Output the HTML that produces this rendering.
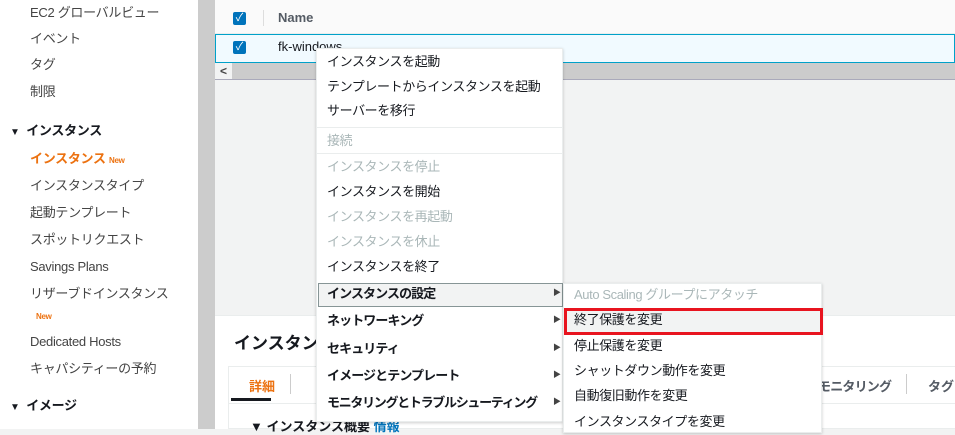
<!DOCTYPE html><html><head><meta charset="utf-8"><style>
*{margin:0;padding:0;box-sizing:border-box}
body{width:955px;height:429px;overflow:hidden;position:relative;background:#f2f3f3;font-family:"Liberation Sans","Noto Sans CJK JP",sans-serif;font-size:13px;color:#16191f}
.a{position:absolute;white-space:nowrap}
.sb{left:0;top:0;width:198px;height:429px;background:#fff}
.sb div{position:absolute;left:30px;line-height:18px;color:#444;letter-spacing:-0.3px}
.g{left:198px;top:0;width:17px;height:429px;background:#ccc}
.cb{width:13px;height:13px;background:#0073bb;border-radius:2px;color:#fff;font-size:11px;line-height:13px;text-align:center}
.m div.i{position:absolute;left:10px;line-height:18px;letter-spacing:-0.4px}
.m div.b{font-weight:bold;letter-spacing:-0.9px}
.dis{color:#aab7b8}
.arr{position:absolute;left:236px;font-size:8px;color:#444}
.sep{position:absolute;left:0;width:246px;height:1px;background:#eaeded}
.s div{position:absolute;left:10px;line-height:18px;letter-spacing:-0.4px}
</style></head><body>
<div class="a sb">
<div style="top:4px">EC2 グローバルビュー</div>
<div style="top:30px">イベント</div>
<div style="top:56px">タグ</div>
<div style="top:83px">制限</div>
<div style="top:122px;left:10px;font-weight:bold;color:#16191f"><span style="font-size:10px">▼</span>&nbsp; インスタンス</div>
<div style="top:150px;color:#ec7211;font-weight:bold">インスタンス <span style="font-size:8px">New</span></div>
<div style="top:177px">インスタンスタイプ</div>
<div style="top:204px">起動テンプレート</div>
<div style="top:231px">スポットリクエスト</div>
<div style="top:258px">Savings Plans</div>
<div style="top:285px">リザーブドインスタンス</div>
<div style="top:308px;left:36px;color:#ec7211;font-weight:bold;font-size:8px">New</div>
<div style="top:333px">Dedicated Hosts</div>
<div style="top:360px">キャパシティーの予約</div>
<div style="top:397px;left:10px;font-weight:bold;color:#16191f"><span style="font-size:10px">▼</span>&nbsp; イメージ</div>
</div>
<div class="a g"></div>
<div class="a" style="left:215px;top:0;width:740px;height:34px;background:#fafafa;border-bottom:1px solid #eaeded"></div>
<div class="a" style="left:263px;top:10px;width:1px;height:16px;background:#ddd"></div>
<div class="a cb" style="left:233px;top:12px">✓</div>
<div class="a" style="left:278px;top:10px;font-weight:bold;color:#545b64">Name</div>
<div class="a" style="left:215px;top:34px;width:740px;height:29px;background:#f1faff;border:1px solid #00a1c9"></div>
<div class="a cb" style="left:233px;top:41px">✓</div>
<div class="a" style="left:278px;top:39px">fk-windows</div>
<div class="a" style="left:215px;top:63px;width:740px;height:17px;background:#ccc;border-bottom:1px solid #aab"></div>
<div class="a" style="left:215px;top:63px;width:17px;height:16px;background:#f2f3f3;font-size:12px;font-weight:bold;text-align:center;line-height:16px;color:#444">&lt;</div>
<div class="a" style="left:215px;top:315px;width:740px;height:114px;background:#fff;border-top:1px solid #eaeded"></div>
<div class="a" style="left:234px;top:329px;font-size:17px;font-weight:bold">インスタンス</div>
<div class="a" style="left:228px;top:366px;width:727px;height:63px;border:1px solid #eaeded;border-right:none"></div>
<div class="a" style="left:228px;top:403px;width:727px;height:1px;background:#eaeded"></div>
<div class="a" style="left:249px;top:376px;color:#ec7211;font-weight:bold">詳細</div>
<div class="a" style="left:231px;top:398px;width:40px;height:3px;background:#16191f"></div>
<div class="a" style="left:290px;top:374px;width:1px;height:20px;background:#ccc"></div>
<div class="a" style="left:818px;top:376px;font-weight:bold;color:#545b64;letter-spacing:-0.8px">モニタリング</div>
<div class="a" style="left:906px;top:374px;width:1px;height:20px;background:#ccc"></div>
<div class="a" style="left:928px;top:376px;font-weight:bold;color:#545b64">タグ</div>
<div class="a" style="left:250px;top:416px;font-weight:bold;font-size:13px">▼ インスタンス概要 <span style="color:#0073bb">情報</span></div>

<div class="a m" style="left:316px;top:48px;width:247px;height:374px;background:#fff;border:1px solid #eaeded;box-shadow:0 1px 3px rgba(0,0,0,.2)">
<div class="i" style="top:4px">インスタンスを起動</div>
<div class="i" style="top:29px">テンプレートからインスタンスを起動</div>
<div class="i" style="top:53px">サーバーを移行</div>
<div class="sep" style="top:78px"></div>
<div class="i dis" style="top:83px">接続</div>
<div class="sep" style="top:104px"></div>
<div class="i dis" style="top:109px">インスタンスを停止</div>
<div class="i" style="top:134px">インスタンスを開始</div>
<div class="i dis" style="top:159px">インスタンスを再起動</div>
<div class="i dis" style="top:184px">インスタンスを休止</div>
<div class="i" style="top:209px">インスタンスを終了</div>
<div style="position:absolute;left:1px;top:234px;width:245px;height:24px;background:#f2f3f3;border:1px solid #879596"></div>
<div class="i b" style="top:236px">インスタンスの設定</div><div class="arr" style="top:238px">▶</div>
<div class="i b" style="top:263px">ネットワーキング</div><div class="arr" style="top:265px">▶</div>
<div class="i b" style="top:291px">セキュリティ</div><div class="arr" style="top:293px">▶</div>
<div class="i b" style="top:318px">イメージとテンプレート</div><div class="arr" style="top:320px">▶</div>
<div class="i b" style="top:345px;letter-spacing:-1.3px">モニタリングとトラブルシューティング</div><div class="arr" style="top:347px">▶</div>
</div>
<div class="a s" style="left:563px;top:283px;width:259px;height:150px;background:#fff;border:1px solid #eaeded;box-shadow:0 1px 3px rgba(0,0,0,.2)">
<div class="dis" style="top:2px">Auto Scaling グループにアタッチ</div>
<div style="position:absolute;left:0;top:24px;width:259px;height:27px;background:#f2f3f3;border:3px solid #e8141f"></div>
<div style="top:27px">終了保護を変更</div>
<div style="top:53px">停止保護を変更</div>
<div style="top:78px">シャットダウン動作を変更</div>
<div style="top:103px">自動復旧動作を変更</div>
<div style="top:129px">インスタンスタイプを変更</div>
</div>
</body></html>
